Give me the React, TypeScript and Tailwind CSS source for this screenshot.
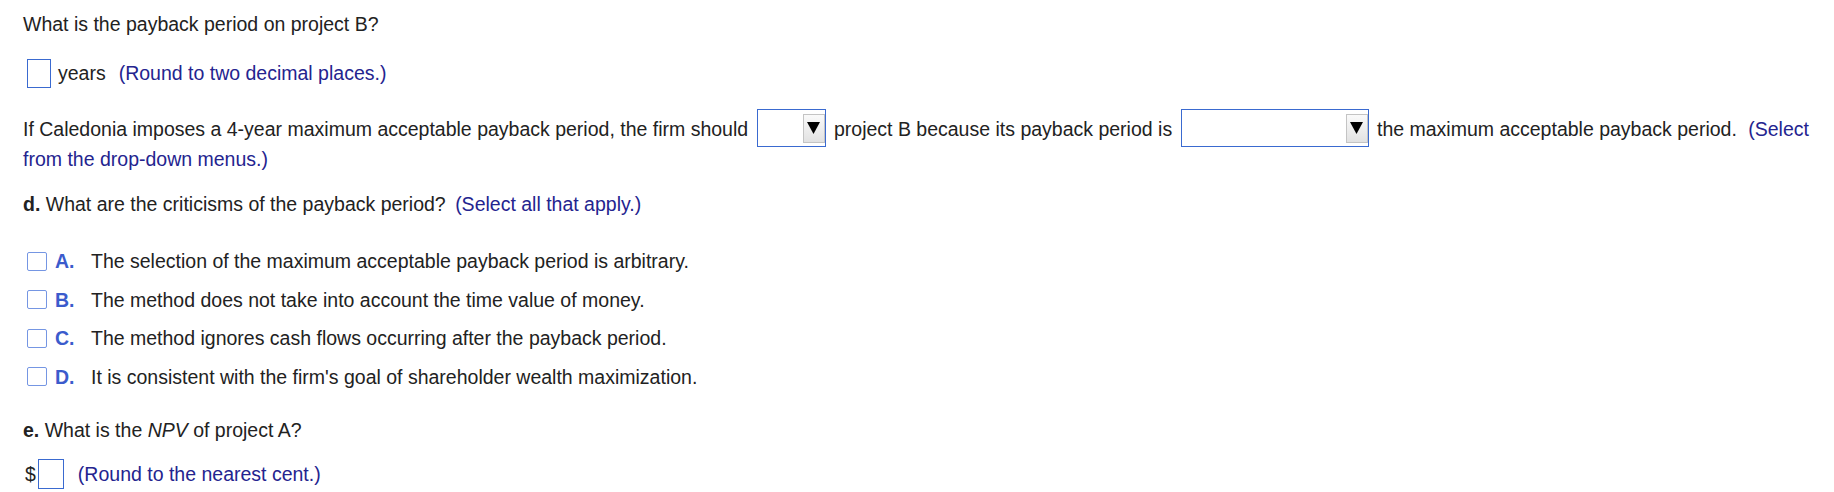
import React from "react";

const INSTR = "text-[#24248f]";

function Dropdown({ width }: { width: string }) {
  return (
    <span
      className={`inline-block overflow-hidden ${width} h-[38px] mx-[3px] align-[-11px] border border-[#3a6ad0] bg-white`}
    >
      <span className="flex h-full items-center justify-end">
        <span className="flex h-[29px] w-[22px] items-center justify-center border border-[#c4c4c4] bg-gradient-to-b from-[#fafafa] to-[#e2e2e2]">
          <svg width="13" height="12" viewBox="0 0 13 12">
            <polygon points="0,0 13,0 6.5,12" fill="#000" />
          </svg>
        </span>
      </span>
    </span>
  );
}

function Option({ letter, text }: { letter: string; text: string }) {
  return (
    <div className="flex h-[38.5px] items-center">
      <span className="ml-[4px] h-[19px] w-[20px] rounded-[2px] border-[1.5px] border-[#7596e3] bg-white" />
      <span className="ml-[8px] w-[36px] font-bold text-[#3b5bcc]">{letter}</span>
      <span>{text}</span>
    </div>
  );
}

export default function App() {
  return (
    <div
      className="w-[1834px] h-[492px] bg-white pl-[23px] pr-[14px] text-[19.5px] leading-[24px] text-[#222]"
      style={{ fontFamily: '"Liberation Sans", Arial, sans-serif' }}
    >
      <p className="pt-[12px]">What is the payback period on project B?</p>

      <div className="mt-[22px] flex h-[30px] items-center">
        <span className="ml-[4px] h-[29px] w-[24px] border border-[#3a6ad0] bg-white" />
        <span className="ml-[7px]">years</span>
        <span className={`ml-[13px] ${INSTR}`}>(Round to two decimal places.)</span>
      </div>

      <p className="mt-[21px]">
        If Caledonia imposes a 4-year maximum acceptable payback period, the firm should{" "}
        <Dropdown width="w-[69px]" /> project B because its payback period is{" "}
        <Dropdown width="w-[188px]" /> the maximum acceptable payback period.{" "}
        <span className={`ml-[6px] ${INSTR}`}>(Select from the drop-down menus.)</span>
      </p>

      <p className="mt-[21px]">
        <span className="font-bold">d.</span> What are the criticisms of the payback period?{" "}
        <span className={`ml-[4px] ${INSTR}`}>(Select all that apply.)</span>
      </p>

      <div className="mt-[26px] flex flex-col">
        <Option letter="A." text="The selection of the maximum acceptable payback period is arbitrary." />
        <Option letter="B." text="The method does not take into account the time value of money." />
        <Option letter="C." text="The method ignores cash flows occurring after the payback period." />
        <Option letter="D." text="It is consistent with the firm's goal of shareholder wealth maximization." />
      </div>

      <p className="mt-[22px]">
        <span className="font-bold">e.</span> What is the <i>NPV</i> of project A?
      </p>

      <div className="mt-[17px] flex h-[30px] items-center">
        <span className="ml-[2px]">$</span>
        <span className="ml-[2px] h-[30px] w-[26px] border border-[#3a6ad0] bg-white" />
        <span className={`ml-[14px] ${INSTR}`}>(Round to the nearest cent.)</span>
      </div>
    </div>
  );
}
